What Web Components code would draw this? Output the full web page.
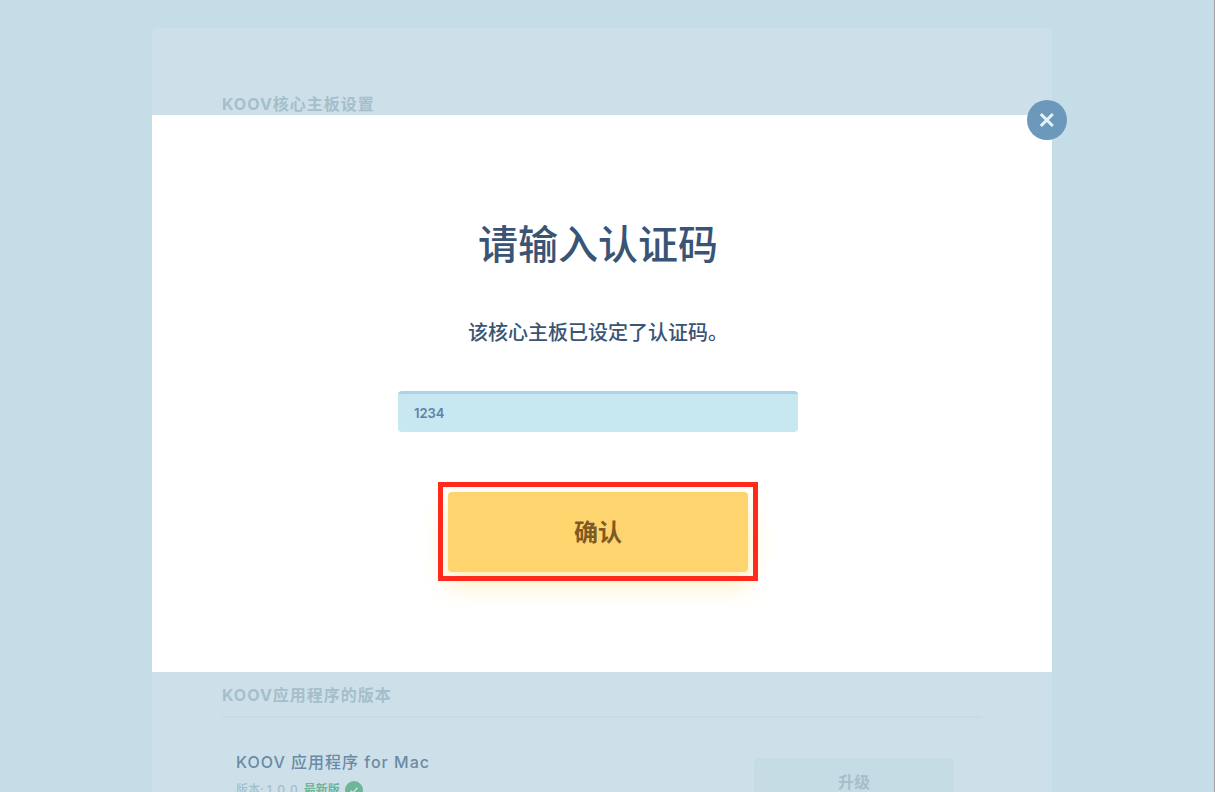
<!DOCTYPE html>
<html lang="zh-CN">
<head>
<meta charset="utf-8">
<meta name="viewport" content="width=device-width, initial-scale=1">
<title>KOOV</title>
<style>
html, body { height: 100%; margin: 0; }
body {
  overflow: hidden;
  background: #c5dde6;
  color: #3a5475;
  font-family: Inter, "Noto Sans CJK SC", sans-serif;
}
</style>
</head>
<body>
<koov-page>
  <settings-card>
    <settings-section heading="KOOV核心主板设置"></settings-section>
    <settings-section heading="KOOV应用程序的版本">
      <version-row name="KOOV 应用程序 for Mac" version="1.0.0"></version-row>
    </settings-section>
  </settings-card>
  <code-dialog slot="dialog"></code-dialog>
</koov-page>

<script>
const define = (name, markup, setup) => {
  customElements.define(name, class extends HTMLElement {
    constructor() {
      super();
      this.attachShadow({ mode: 'open' }).innerHTML = markup;
    }
    connectedCallback() {
      if (setup) setup(this, this.shadowRoot);
    }
  });
};

define('koov-page', `
  <style>
    :host { display: block; height: 100vh; overflow: hidden; position: relative; box-sizing: border-box;
      padding: 28px 10px 0 0; border-right: 1px solid #a0a3a6; }
    .overlay { position: absolute; inset: 115px 10px auto 0; display: flex; justify-content: center; }
  </style>
  <slot></slot>
  <div class="overlay"><slot name="dialog"></slot></div>
`);

define('settings-card', `
  <style>
    :host { display: flex; flex-direction: column; gap: 556px; box-sizing: border-box;
      width: 100%; max-width: 900px; margin: 0 auto; padding: 64px 70px;
      border-radius: 6px; background: #cde0e9; }
  </style>
  <slot></slot>
`);

define('settings-section', `
  <style>
    :host { display: block; }
    h2 { margin: 0; padding-bottom: 9px; border-bottom: 2px solid #c5dce5;
      color: #a4bfca; font-size: 16px; line-height: 24px; font-weight: 700; letter-spacing: 1px; }
  </style>
  <h2></h2>
  <slot></slot>
`, (host, root) => { root.querySelector('h2').textContent = host.getAttribute('heading'); });

define('version-row', `
  <style>
    :host { display: flex; justify-content: space-between; align-items: flex-start; padding: 32px 28px 0 14px; }
    h3 { margin: 0; color: #6b8aa5; font-size: 16px; line-height: 24px; font-weight: 500; letter-spacing: 1px; }
    p { margin: 6px 0 0; display: flex; align-items: center; font-size: 12px; line-height: 20px; color: #a4bfca; font-weight: 500; }
    .label { white-space: pre; }
    .number { letter-spacing: 1px; }
    strong { margin: 0 5px; color: #6fb398; font-weight: 700; }
    button { width: 200px; height: 48px; margin-top: 8px; border: 0; border-radius: 4px;
      background: #c5dce4; color: #a4bfca; font: 700 16px/24px Inter, "Noto Sans CJK SC", sans-serif; }
  </style>
  <div>
    <h3></h3>
    <p><span class="label">版本: </span><span class="number"></span><strong>最新版</strong>
      <svg width="18" height="18" viewBox="0 0 18 18" aria-hidden="true">
        <circle cx="9" cy="9" r="9" fill="#6fb598"/>
        <path d="M5.5 9.4 8 11.8l4.5-5" fill="none" stroke="#cde0e9" stroke-width="1.4"/>
      </svg></p>
  </div>
  <button type="button" disabled>升级</button>
`, (host, root) => {
  root.querySelector('h3').textContent = host.getAttribute('name');
  root.querySelector('.number').textContent = host.getAttribute('version');
});

define('code-dialog', `
  <style>
    :host { display: block; position: relative; box-sizing: border-box; width: 100%; max-width: 900px;
      padding: 100px 8px 91px 0; background: #fff; }
    form { display: flex; flex-direction: column; align-items: center; }
    h1 { margin: 0; font-size: 40px; line-height: 60px; font-weight: 500; }
    label { margin: 43px 0; font-size: 20px; line-height: 30px; font-weight: 500; }
    input { box-sizing: border-box; width: 400px; max-width: 100%; height: 41px; padding: 0 16px;
      border: 0; border-top: 3px solid #a9d4e5; border-radius: 4px; outline: 0;
      background: #c8e8f1; color: #5e81a9; font: 600 13px/20px Inter, "Noto Sans CJK SC", sans-serif; }
    .highlight { position: relative; margin-top: 50px; padding: 10px 10px 9px; }
    .highlight::after { content: ""; position: absolute; inset: 0; border: 5px solid #ff291c; pointer-events: none; }
    .submit { display: block; width: 300px; height: 80px; padding: 2px 0 0; border: 0; border-radius: 4px;
      background: #fed46f; box-shadow: 0 12px 24px rgba(254, 212, 96, .45);
      color: #7e5a25; font: 700 24px/36px Inter, "Noto Sans CJK SC", sans-serif; }
    .close { position: absolute; top: -15px; right: -15px; width: 40px; height: 40px; padding: 0;
      border: 0; border-radius: 50%; background: #6c98bb; display: grid; place-items: center; }
  </style>
  <form role="dialog" aria-labelledby="title">
    <h1 id="title">请输入认证码</h1>
    <label for="code">该核心主板已设定了认证码。</label>
    <input id="code" type="text" value="1234">
    <div class="highlight"><button class="submit" type="button">确认</button></div>
  </form>
  <button class="close" type="button" aria-label="关闭">
    <svg width="16" height="16" viewBox="0 0 16 16"><path d="M1.8 2l12 12M13.8 2l-12 12" stroke="#e6f3f8" stroke-width="3" fill="none"/></svg>
  </button>
`);
</script>
</body>
</html>
